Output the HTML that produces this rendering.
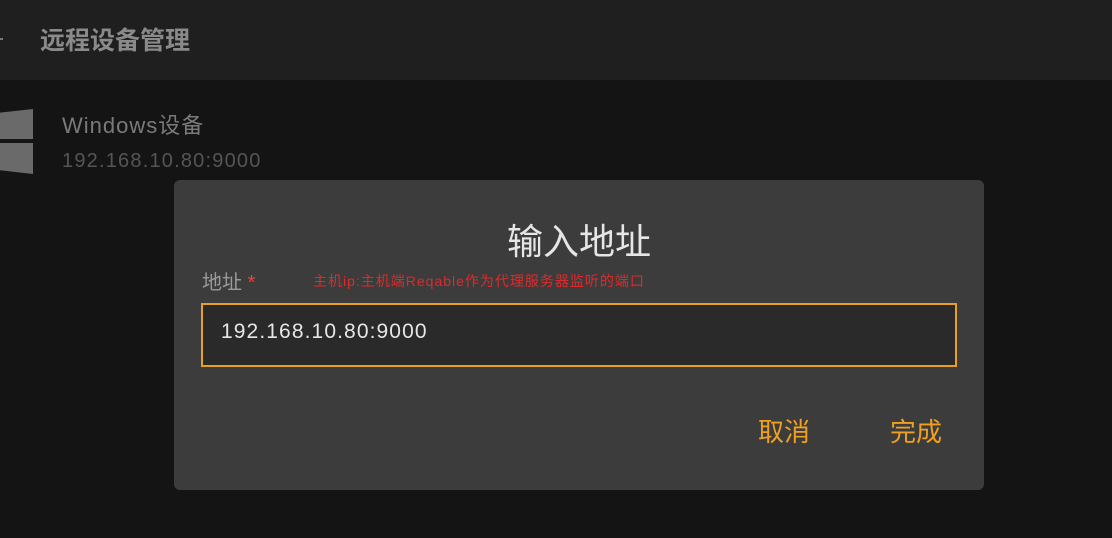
<!DOCTYPE html>
<html><head><meta charset="utf-8"><style>
body{margin:0;width:1112px;height:538px;background:#141414;position:relative;overflow:hidden;font-family:"Liberation Sans","Noto Sans CJK SC",sans-serif}
.top{position:absolute;left:0;top:0;width:1112px;height:80px;background:#1f1f1f}
.t{position:absolute;left:40px;top:21px;font-size:25px;font-weight:bold;color:#8a8a8a}
.win{position:absolute;left:0;background:#6a6a6a}
.dlg{position:absolute;left:174px;top:180px;width:810px;height:310px;background:#3c3c3c;border-radius:6px}
</style></head><body>
<div class="top"><div style="position:absolute;left:0;top:38px;width:3px;height:2px;background:#777"></div><div class="t">远程设备管理</div></div>
<div class="win" style="top:109px;width:33px;height:30px;clip-path:polygon(0 12%,100% 0,100% 100%,0 100%)"></div>
<div class="win" style="top:143px;width:33px;height:31px;clip-path:polygon(0 0,100% 0,100% 100%,0 88%)"></div>
<div style="position:absolute;left:62px;top:108px;font-size:22px;color:#7a7a7a;letter-spacing:1px">Windows设备</div>
<div style="position:absolute;left:62px;top:150px;font-size:20px;color:#555;letter-spacing:1.2px">192.168.10.80:9000</div>
<div class="dlg">
<div style="position:absolute;left:0;width:810px;top:33px;text-align:center;font-size:36px;color:#e6e6e6">输入地址</div>
<div style="position:absolute;left:28px;top:86px;font-size:20px;color:#9a9a9a">地址 <span style="color:#e0483c">*</span></div>
<div style="position:absolute;left:139px;top:91px;font-size:14px;color:#e02a2a;letter-spacing:1px">主机ip:主机端Reqable作为代理服务器监听的端口</div>
<div style="position:absolute;left:27px;top:123px;width:756px;height:64px;border:2px solid #e8a020;background:#2a2a2a;box-sizing:border-box"></div>
<div style="position:absolute;left:47px;top:140px;font-size:21px;color:#e6e6e6;letter-spacing:1.1px">192.168.10.80:9000</div>
<div style="position:absolute;left:584px;top:232px;font-size:26px;color:#f0a020">取消</div>
<div style="position:absolute;left:716px;top:232px;font-size:26px;color:#f0a020">完成</div>
</div>
</body></html>
